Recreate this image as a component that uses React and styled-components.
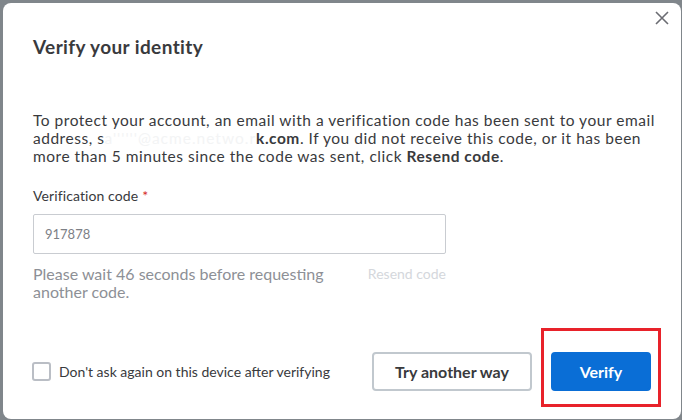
import React, { useState } from 'react'
import styled, { createGlobalStyle } from 'styled-components'

const Global = createGlobalStyle`
  html, body {
    margin: 0;
    padding: 0;
    background: #80868b;
    font-family: Lato, "Open Sans", sans-serif;
    color: #393a3d;
  }
`

const Screen = styled.div`
  width: 682px;
  height: 420px;
  padding: 3px 1px 1px 3px;
  box-sizing: border-box;
`

const Modal = styled.div`
  position: relative;
  height: 100%;
  background: #fff;
  border-radius: 8px;
  padding: 31px 30px 0 30px;
  box-sizing: border-box;
  display: flex;
  flex-direction: column;
`

const Close = styled.button`
  position: absolute;
  top: 5px;
  right: 9px;
  width: 20px;
  height: 20px;
  padding: 0;
  border: none;
  background: transparent;
  cursor: pointer;
  display: grid;
  place-items: center;
`

const Title = styled.h2`
  margin: 0;
  font-size: 19px;
  line-height: 26px;
  font-weight: 700;
  color: #393a3d;
  letter-spacing: 0.4px;
`

const Text = styled.p`
  margin: 51px 0 0;
  font-size: 15.5px;
  line-height: 18px;
  color: #393a3d;
  letter-spacing: 0.52px;
  white-space: nowrap;
  b { font-weight: 700; }
`

const Faded = styled.span`
  color: #f3f4f5;
  letter-spacing: 1px;
`

const Label = styled.label`
  display: block;
  margin-top: 23px;
  font-size: 14px;
  line-height: 16px;
  color: #393a3d;
  letter-spacing: 0.1px;
  span { color: #d52b1e; margin-left: 4px; }
`

const Field = styled.input`
  display: block;
  margin-top: 10px;
  width: 413px;
  height: 40px;
  box-sizing: border-box;
  border: 1px solid #c9ccd1;
  border-radius: 2px;
  padding: 0 11px;
  font-family: inherit;
  font-size: 13px;
  color: #7d8086;
  outline: none;
`

const WaitRow = styled.div`
  display: flex;
  justify-content: space-between;
  width: 413px;
  margin-top: 11px;
`

const Wait = styled.div`
  width: 320px;
  font-size: 16px;
  line-height: 18px;
  color: #8d9096;
`

const Resend = styled.div`
  font-size: 14px;
  line-height: 18px;
  color: #d4d7dc;
`

const Footer = styled.div`
  margin-top: auto;
  margin-bottom: 12px;
  display: flex;
  align-items: center;
  margin-right: -10px;
`

const Check = styled.label`
  display: flex;
  align-items: center;
  gap: 8px;
  margin-top: 8px;
  margin-left: -1px;
  font-size: 14px;
  color: #393a3d;
  flex: 1;
  cursor: pointer;
`

const Box = styled.span`
  width: 19px;
  height: 19px;
  box-sizing: border-box;
  border: 2px solid #babec5;
  border-radius: 3px;
  background: ${p => (p.$on ? '#0a6ed6' : '#fff')};
`

const Button = styled.button`
  width: ${p => p.$w}px;
  height: 39px;
  margin-top: ${p => (p.$primary ? 0 : 8)}px;
  box-sizing: border-box;
  border-radius: 4px;
  font-family: inherit;
  font-size: 16px;
  font-weight: 700;
  cursor: pointer;
  padding: 0;
  border: 2px solid ${p => (p.$primary ? '#0a6ed6' : '#c1c8ce')};
  background: ${p => (p.$primary ? '#0a6ed6' : '#fff')};
  color: ${p => (p.$primary ? '#fff' : '#393a3d')};
`

const Highlight = styled.div`
  margin-left: 9px;
  padding: 21px 7px 13px 7px;
  border: 3px solid #e8222a;
`

export default function App() {
  const [on, setOn] = useState(false)
  return (
    <>
      <Global />
      <Screen>
        <Modal>
          <Close aria-label="Close">
            <svg width="14" height="14" viewBox="0 0 14 14">
              <path d="M1 1L13 13M13 1L1 13" stroke="#6b6c72" strokeWidth="1.6" />
            </svg>
          </Close>
          <Title>Verify your identity</Title>
          <Text>
            To protect your account, an email with a verification code has been sent to your email
            <br />
            address, s<Faded>a''''''@acme.netwo.r</Faded><b>k.com</b>. If you did not receive this code, or it has been
            <br />
            more than 5 minutes since the code was sent, click <b>Resend code</b>.
          </Text>
          <Label>
            Verification code<span>*</span>
          </Label>
          <Field defaultValue="917878" />
          <WaitRow>
            <Wait>Please wait 46 seconds before requesting another code.</Wait>
            <Resend>Resend code</Resend>
          </WaitRow>
          <Footer>
            <Check onClick={() => setOn(!on)}>
              <Box $on={on} />
              Don't ask again on this device after verifying
            </Check>
            <Button $w={160}>Try another way</Button>
            <Highlight>
              <Button $primary $w={100}>Verify</Button>
            </Highlight>
          </Footer>
        </Modal>
      </Screen>
    </>
  )
}
